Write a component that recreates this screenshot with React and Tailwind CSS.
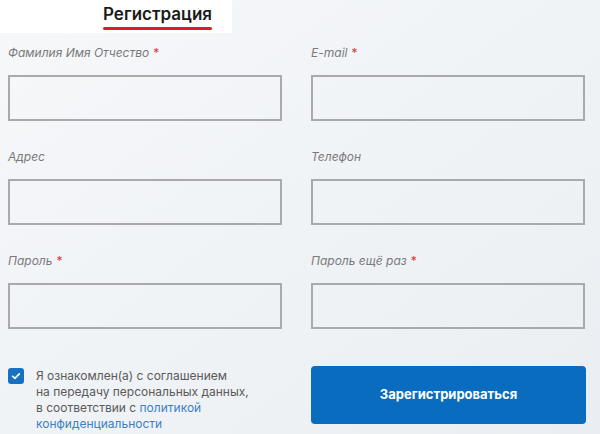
const fields = [
  [
    { label: "Фамилия Имя Отчество", required: true },
    { label: "E-mail", required: true },
  ],
  [
    { label: "Адрес" },
    { label: "Телефон" },
  ],
  [
    { label: "Пароль", required: true, type: "password" },
    { label: "Пароль ещё раз", required: true, type: "password" },
  ],
];

function Field({ label, required, type = "text" }) {
  return (
    <label className="flex flex-col">
      <span className="h-[22px] text-[12px] italic text-[#7a7a7a] leading-[22px]">
        {label}
        {required && <span className="ml-1 text-[#e0343b] not-italic">*</span>}
      </span>
      <input
        type={type}
        className="mt-[11px] h-[46px] w-full border-2 border-[#a9aaab] bg-transparent px-3 text-[13px] outline-none"
      />
    </label>
  );
}

export default function App() {
  return (
    <div
      className="w-[600px] h-[434px] overflow-hidden bg-gradient-to-br from-[#f6f8fa] to-[#eaeef2]"
      style={{ fontFamily: "Inter, 'Noto Sans', sans-serif" }}
    >
      {/* Tab header */}
      <div className="flex">
        <div className="w-[232px] h-[33px] bg-white flex justify-end pr-[20px]">
          <div className="flex flex-col items-center">
            <span className="pt-[4px] text-[17px] font-semibold text-[#1b1b1b] leading-[20px]">
              Регистрация
            </span>
            <span className="mt-[3px] h-[3px] w-[109px] rounded-full bg-[#d71f26]" />
          </div>
        </div>
      </div>

      {/* Form grid */}
      <div className="px-[8px] pt-[9px]">
        {fields.map((row, i) => (
          <div key={i} className="grid grid-cols-[274px_274px] gap-x-[29px] mb-[25px]">
            {row.map((f) => (
              <Field key={f.label} {...f} />
            ))}
          </div>
        ))}

        <div className="grid grid-cols-[274px_275px] gap-x-[29px] -mt-[12px]">
          <div className="flex items-start gap-[12px] pt-[25px]">
            <span className="mt-[1px] flex h-[16px] w-[16px] shrink-0 items-center justify-center rounded-[3px] bg-[#1670c3]">
              <svg viewBox="0 0 12 12" className="h-[10px] w-[10px]">
                <path d="M2 6.3l2.6 2.5L10 3.4" fill="none" stroke="#fff" strokeWidth="2" strokeLinecap="round" strokeLinejoin="round" />
              </svg>
            </span>
            <p className="mt-[1px] text-[12px] leading-[16px] text-[#5a5a5a]">
              Я ознакомлен(а) с соглашением
              <br />
              на передачу персональных данных,
              <br />
              в соответствии с <a className="text-[#3d7fc6]">политикой</a>
              <br />
              <a className="text-[#3d7fc6]">конфиденциальности</a>
            </p>
          </div>
          <button className="mt-[24px] h-[58px] w-full rounded-[4px] bg-[#0a6cbf] text-[13px] font-bold text-white">
            Зарегистрироваться
          </button>
        </div>
      </div>
    </div>
  );
}
